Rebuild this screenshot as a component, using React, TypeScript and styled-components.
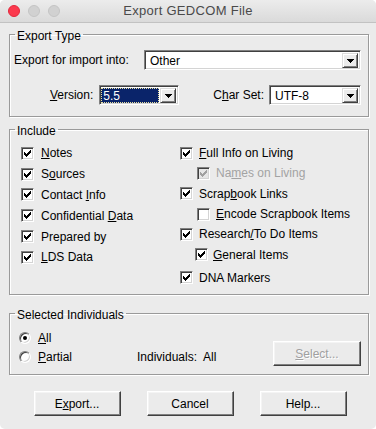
import React from "react";
import styled, { createGlobalStyle } from "styled-components";

const Global = createGlobalStyle`
  html, body { margin: 0; padding: 0; background: #ffffff; }
  body { font-family: "Liberation Sans", Arial, sans-serif; font-size: 12px; color: #000; }
  * { box-sizing: border-box; }
`;

const Window = styled.div`
  width: 376px;
  height: 429px;
  background: #ebebeb;
  border-radius: 5px;
  overflow: hidden;
  display: flex;
  flex-direction: column;
`;

const TitleBar = styled.div`
  height: 23px;
  flex: none;
  display: grid;
  grid-template-columns: 60px 1fr 60px;
  align-items: center;
  background: linear-gradient(#ececec, #dadada);
  border-bottom: 1px solid #c2c2c2;
`;

const Lights = styled.div`
  display: flex;
  gap: 8px;
  padding-left: 8px;
  padding-bottom: 1px;
`;

const Light = styled.span<{ $red?: boolean }>`
  width: 12px;
  height: 12px;
  border-radius: 50%;
  background: ${(p) => (p.$red ? "#fb3a4e" : "#d1d1d1")};
  border: 1px solid ${(p) => (p.$red ? "#e2283c" : "#c4c4c4")};
`;

const Title = styled.div`
  text-align: center;
  font-family: "Liberation Sans", Arial, sans-serif;
  font-size: 13px;
  letter-spacing: 0.3px;
  color: #4a4a4a;
  padding-bottom: 1px;
`;

const Body = styled.div`
  flex: 1;
  display: flex;
  flex-direction: column;
  padding: 2px 7px 0 9px;
`;

const Group = styled.fieldset<{ $mt?: number }>`
  margin: ${(p) => p.$mt ?? 0}px 0 0 0;
  padding: 0;
  min-width: 0;
  border: 1px solid #9a9a9a;
  box-shadow: inset 1px 1px 0 #ffffff, 1px 1px 0 #ffffff;
`;

const Legend = styled.legend`
  margin-left: 5px;
  padding: 3px 2px 0;
  line-height: 16px;
  font-size: 12px;
`;

const ExportContent = styled.div`
  display: flex;
  flex-direction: column;
  gap: 15px;
  padding: 6px 7px 11px 4px;
`;

const Row = styled.div<{ $end?: boolean }>`
  display: flex;
  align-items: center;
  justify-content: ${(p) => (p.$end ? "flex-end" : "flex-start")};
`;

const FieldLabel = styled.span<{ $w?: number; $ml?: number }>`
  width: ${(p) => (p.$w ? `${p.$w}px` : "auto")};
  margin-left: ${(p) => p.$ml ?? 0}px;
  flex: none;
  white-space: nowrap;
`;

const Combo = styled.div<{ $w?: number; $ml?: number }>`
  height: 20px;
  width: ${(p) => (p.$w ? `${p.$w}px` : "auto")};
  flex: ${(p) => (p.$w ? "none" : "1")};
  margin-left: ${(p) => p.$ml ?? 0}px;
  display: flex;
  align-items: stretch;
  background: #ffffff;
  border: 1px solid;
  border-color: #808080 #ffffff #ffffff #808080;
  box-shadow: inset 1px 1px 0 #404040, inset -1px -1px 0 #d4d4d4;
  padding: 2px 2px 1px 1px;
`;

const ComboValue = styled.div<{ $selected?: boolean }>`
  flex: 1;
  display: flex;
  align-items: center;
  padding-left: ${(p) => (p.$selected ? 1 : 3)}px;
  margin-right: ${(p) => (p.$selected ? 1 : 0)}px;
  background: ${(p) => (p.$selected ? "#0a246a" : "transparent")};
  color: ${(p) => (p.$selected ? "#ffffff" : "#000000")};
  border: 1px dotted ${(p) => (p.$selected ? "#e8e0a0" : "transparent")};
`;

const DropBtn = styled.div`
  width: 16px;
  flex: none;
  background: #ebebeb;
  border: 1px solid;
  border-color: #dcdcdc #404040 #404040 #dcdcdc;
  box-shadow: inset 1px 1px 0 #ffffff, inset -1px -1px 0 #808080;
  display: flex;
  align-items: center;
  justify-content: center;
`;

const IncludeContent = styled.div`
  height: 155px;
  display: grid;
  grid-template-columns: 159px 1fr;
  padding: 4px 0 0 11px;
`;

const Col = styled.div`
  display: flex;
  flex-direction: column;
`;

const CheckRow = styled.div<{ $h: number; $indent?: number; $gap: number; $mt?: number; $disabled?: boolean }>`
  height: ${(p) => p.$h}px;
  margin-top: ${(p) => p.$mt ?? 0}px;
  padding-left: ${(p) => p.$indent ?? 0}px;
  display: flex;
  align-items: center;
  gap: ${(p) => p.$gap}px;
  white-space: nowrap;
  color: ${(p) => (p.$disabled ? "#a3a3a3" : "#000")};
`;

const Box = styled.span<{ $disabled?: boolean }>`
  width: 13px;
  height: 13px;
  flex: none;
  border: 1px solid;
  border-color: #808080 #ffffff #ffffff #808080;
  box-shadow: inset 1px 1px 0 #404040, inset -1px -1px 0 #d4d4d4;
  background: ${(p) => (p.$disabled ? "#e6e6e6" : "#ffffff")};
  display: flex;
  align-items: center;
  justify-content: center;
`;

const U = styled.span`
  text-decoration: underline;
  text-underline-offset: 1px;
`;

const SelectedContent = styled.div`
  height: 51px;
  display: flex;
  align-items: flex-end;
  padding: 5px 7px 8px 9px;
`;

const RadioCol = styled.div`
  width: 118px;
  flex: none;
  display: flex;
  flex-direction: column;
`;

const RadioRow = styled.div`
  height: 19px;
  display: flex;
  align-items: center;
  gap: 7px;
`;

const Radio = styled.span<{ $on?: boolean }>`
  width: 12px;
  height: 12px;
  flex: none;
  border-radius: 50%;
  border: 1px solid;
  border-color: #808080 #ffffff #ffffff #808080;
  box-shadow: inset 1px 1px 0 #404040, inset -1px -1px 0 #d4d4d4;
  background: #ffffff;
  display: flex;
  align-items: center;
  justify-content: center;
  &::after {
    content: "";
    width: 4px;
    height: 4px;
    border-radius: 50%;
    background: #000;
    display: ${(p) => (p.$on ? "block" : "none")};
  }
`;

const IndText = styled.div`
  height: 19px;
  display: flex;
  align-items: center;
  flex: 1;
`;

const Button = styled.button<{ $w?: number; $disabled?: boolean }>`
  width: ${(p) => p.$w ?? 87}px;
  height: 25px;
  flex: none;
  padding: 0;
  font: 12px "Liberation Sans", Arial, sans-serif;
  color: ${(p) => (p.$disabled ? "#a0a0a0" : "#000")};
  text-shadow: ${(p) => (p.$disabled ? "1px 1px 0 #ffffff" : "none")};
  background: #ebebeb;
  border: 1px solid;
  border-color: #ffffff #404040 #404040 #ffffff;
  box-shadow: inset -1px -1px 0 #808080, inset 1px 1px 0 #f4f4f4;
`;

const ButtonRow = styled.div`
  display: flex;
  justify-content: center;
  gap: 26px;
  margin-top: 16px;
  padding-left: 2px;
`;

const Check = ({ disabled }: { disabled?: boolean }) => (
  <svg width="7" height="7" viewBox="0 0 7 7" shapeRendering="crispEdges">
    <path
      fill={disabled ? "#a0a0a0" : "#000"}
      d="M0 2h1v3H0z M1 3h1v3H1z M2 4h1v3H2z M3 3h1v3H3z M4 2h1v3H4z M5 1h1v3H5z M6 0h1v3H6z"
    />
  </svg>
);

const Arrow = () => (
  <svg width="7" height="4" viewBox="0 0 7 4" shapeRendering="crispEdges">
    <path fill="#000" d="M0 0h7v1H0z M1 1h5v1H1z M2 2h3v1H2z M3 3h1v1H3z" />
  </svg>
);

type Item = {
  label: React.ReactNode;
  checked: boolean;
  disabled?: boolean;
  indent?: number;
  gap: number;
  mt?: number;
};

const leftItems: Item[] = [
  { label: <><U>N</U>otes</>, checked: true, gap: 7 },
  { label: <>S<U>o</U>urces</>, checked: true, gap: 7 },
  { label: <>Contact <U>I</U>nfo</>, checked: true, gap: 7 },
  { label: <>Confidential <U>D</U>ata</>, checked: true, gap: 7 },
  { label: <>Prepared by</>, checked: true, gap: 7 },
  { label: <><U>L</U>DS Data</>, checked: true, gap: 7 },
];

const rightItems: Item[] = [
  { label: <><U>F</U>ull Info on Living</>, checked: true, gap: 6 },
  { label: <>Na<U>m</U>es on Living</>, checked: true, disabled: true, indent: 17, gap: 6 },
  { label: <>Scrap<U>b</U>ook Links</>, checked: true, gap: 6 },
  { label: <><U>E</U>ncode Scrapbook Items</>, checked: false, indent: 17, gap: 6 },
  { label: <>Research<U>/</U>To Do Items</>, checked: true, gap: 6 },
  { label: <><U>G</U>eneral Items</>, checked: true, indent: 15, gap: 5 },
  { label: <>DNA Markers</>, checked: true, gap: 6, mt: 3 },
];

const CheckItem = ({ item, h }: { item: Item; h: number }) => (
  <CheckRow $h={h} $indent={item.indent} $gap={item.gap} $mt={item.mt} $disabled={item.disabled}>
    <Box $disabled={item.disabled}>{item.checked && <Check disabled={item.disabled} />}</Box>
    <span>{item.label}</span>
  </CheckRow>
);

export default function App() {
  return (
    <>
      <Global />
      <Window>
        <TitleBar>
          <Lights>
            <Light $red />
            <Light />
            <Light />
          </Lights>
          <Title>Export GEDCOM File</Title>
          <span />
        </TitleBar>
        <Body>
          <Group>
            <Legend>Export Type</Legend>
            <ExportContent>
              <Row>
                <FieldLabel $w={130}>Export for import into:</FieldLabel>
                <Combo>
                  <ComboValue>Other</ComboValue>
                  <DropBtn>
                    <Arrow />
                  </DropBtn>
                </Combo>
              </Row>
              <Row $end>
                <FieldLabel>
                  <U>V</U>ersion:
                </FieldLabel>
                <Combo $w={80} $ml={6}>
                  <ComboValue $selected>5.5</ComboValue>
                  <DropBtn>
                    <Arrow />
                  </DropBtn>
                </Combo>
                <FieldLabel $ml={34}>
                  C<U>h</U>ar Set:
                </FieldLabel>
                <Combo $w={92} $ml={5}>
                  <ComboValue>UTF-8</ComboValue>
                  <DropBtn>
                    <Arrow />
                  </DropBtn>
                </Combo>
              </Row>
            </ExportContent>
          </Group>

          <Group $mt={3}>
            <Legend>Include</Legend>
            <IncludeContent>
              <Col>
                {leftItems.map((it, i) => (
                  <CheckItem key={i} item={it} h={20.8} />
                ))}
              </Col>
              <Col>
                {rightItems.map((it, i) => (
                  <CheckItem key={i} item={it} h={20.3} />
                ))}
              </Col>
            </IncludeContent>
          </Group>

          <Group $mt={9}>
            <Legend>Selected Individuals</Legend>
            <SelectedContent>
              <RadioCol>
                <RadioRow>
                  <Radio $on />
                  <span>
                    <U>A</U>ll
                  </span>
                </RadioRow>
                <RadioRow>
                  <Radio />
                  <span>
                    <U>P</U>artial
                  </span>
                </RadioRow>
              </RadioCol>
              <IndText>Individuals:&nbsp; All</IndText>
              <Button $w={88} $disabled>
                <U>S</U>elect...
              </Button>
            </SelectedContent>
          </Group>

          <ButtonRow>
            <Button>
              E<U>x</U>port...
            </Button>
            <Button>Cancel</Button>
            <Button>Help...</Button>
          </ButtonRow>
        </Body>
      </Window>
    </>
  );
}
